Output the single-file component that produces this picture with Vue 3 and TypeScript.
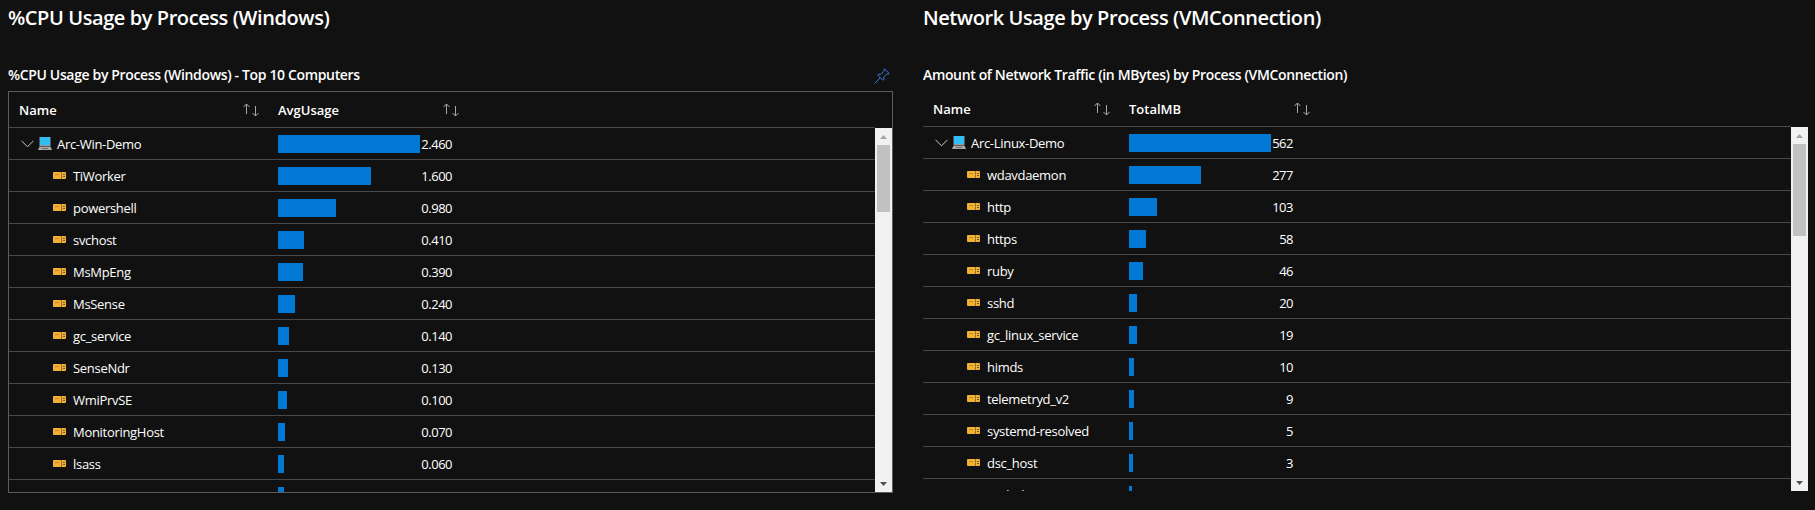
<script setup lang="ts">
type Proc = { name: string; value: number }

type Panel = {
  key: string
  heading: string
  subtitle: string
  metric: string
  pinned: boolean
  digits: number
  thumb: number
  host: string
  total: number
  procs: Proc[]
}

const panels: Panel[] = [
  {
    key: 'cpu',
    heading: '%CPU Usage by Process (Windows)',
    subtitle: '%CPU Usage by Process (Windows) - Top 10 Computers',
    metric: 'AvgUsage',
    pinned: true,
    digits: 3,
    thumb: 67,
    host: 'Arc-Win-Demo',
    total: 2.46,
    procs: [
      { name: 'TiWorker', value: 1.6 },
      { name: 'powershell', value: 0.98 },
      { name: 'svchost', value: 0.41 },
      { name: 'MsMpEng', value: 0.39 },
      { name: 'MsSense', value: 0.24 },
      { name: 'gc_service', value: 0.14 },
      { name: 'SenseNdr', value: 0.13 },
      { name: 'WmiPrvSE', value: 0.1 },
      { name: 'MonitoringHost', value: 0.07 },
      { name: 'lsass', value: 0.06 },
      { name: 'WmiApSrv', value: 0.05 },
    ],
  },
  {
    key: 'net',
    heading: 'Network Usage by Process (VMConnection)',
    subtitle: 'Amount of Network Traffic (in MBytes) by Process (VMConnection)',
    metric: 'TotalMB',
    pinned: false,
    digits: 0,
    thumb: 92,
    host: 'Arc-Linux-Demo',
    total: 562,
    procs: [
      { name: 'wdavdaemon', value: 277 },
      { name: 'http', value: 103 },
      { name: 'https', value: 58 },
      { name: 'ruby', value: 46 },
      { name: 'sshd', value: 20 },
      { name: 'gc_linux_service', value: 19 },
      { name: 'himds', value: 10 },
      { name: 'telemetryd_v2', value: 9 },
      { name: 'systemd-resolved', value: 5 },
      { name: 'dsc_host', value: 3 },
      { name: 'auditd', value: 2 },
    ],
  },
]

// bars never collapse completely, 3px is the floor
function barWidth(value: number, total: number) {
  return `${3 + (value / total) * 139}px`
}
</script>

<template>
  <div class="page">
    <section v-for="p in panels" :key="p.key" class="panel" :class="p.key">
      <h2 class="heading">{{ p.heading }}</h2>
      <div class="subtitle-row">
        <h3 class="subtitle">{{ p.subtitle }}</h3>
        <svg v-if="p.pinned" class="pin" width="16" height="16" viewBox="0 0 16 16" fill="none" stroke="#3a7bd5" stroke-width="1">
          <path d="M10.5 .8 15.2 5.5 14.2 6 13 5.8 9.8 9 9.8 11.6 8.8 12.2 3.8 7.2 4.4 6.2 7 6.2 10.2 3 10 1.8Z" />
          <path d="M6 10 .6 15.4" />
        </svg>
      </div>

      <div class="grid">
        <div class="head">
          <div class="col-name">
            <span>Name</span>
            <svg class="sort" width="16" height="14" viewBox="0 0 16 14" fill="none" stroke="#a8a8a8" stroke-width="1">
              <path d="M3.5 11V1M.5 4 3.5 1 6.5 4" />
              <path d="M12.5 3V13M9.5 10 12.5 13 15.5 10" />
            </svg>
          </div>
          <div class="col-value">
            <span>{{ p.metric }}</span>
            <svg class="sort" width="16" height="14" viewBox="0 0 16 14" fill="none" stroke="#a8a8a8" stroke-width="1">
              <path d="M3.5 11V1M.5 4 3.5 1 6.5 4" />
              <path d="M12.5 3V13M9.5 10 12.5 13 15.5 10" />
            </svg>
          </div>
        </div>

        <div class="body">
          <div class="rows">
            <div class="row">
              <div class="col-name host">
                <svg class="chevron" width="13" height="8" viewBox="0 0 13 8" fill="none" stroke="#c8c8c8" stroke-width="1">
                  <path d="M.5 .8 6.5 6.8 12.5 .8" />
                </svg>
                <svg class="laptop" width="14" height="13" viewBox="0 0 14 13">
                  <rect x="1.5" y="0" width="11" height="9" fill="#8f9aa3" />
                  <rect x="2" y="0" width="10" height="8" fill="#2fbdf5" />
                  <path d="M1.5 9.5H12.5L14 13H0Z" fill="#a9a9a9" />
                  <rect x="4" y="11" width="6" height="1" fill="#6d6d6d" />
                </svg>
                <span>{{ p.host }}</span>
              </div>
              <div class="col-value">
                <div class="track">
                  <div class="bar" :style="{ width: barWidth(p.total, p.total) }" />
                </div>
                <span class="num">{{ p.total.toFixed(p.digits) }}</span>
              </div>
            </div>

            <div v-for="proc in p.procs" :key="proc.name" class="row">
              <div class="col-name proc">
                <svg class="chip" width="13" height="7" viewBox="0 0 13 7">
                  <rect width="13" height="7" rx="1" fill="#f2b136" />
                  <rect x="8" y="0" width="1" height="7" fill="#9a7226" />
                  <rect x="2" y="2" width="4" height="1" fill="#c48d28" />
                  <rect x="10" y="2" width="2" height="1" fill="#7a5a20" />
                  <rect x="10" y="4" width="2" height="1" fill="#7a5a20" />
                </svg>
                <span>{{ proc.name }}</span>
              </div>
              <div class="col-value">
                <div class="track">
                  <div class="bar" :style="{ width: barWidth(proc.value, p.total) }" />
                </div>
                <span class="num">{{ proc.value.toFixed(p.digits) }}</span>
              </div>
            </div>
          </div>

          <div class="scrollbar">
            <div class="arrow-box">
              <svg width="7" height="4" viewBox="0 0 7 4"><path d="M3.5 0 7 4H0Z" fill="#a3a3a3" /></svg>
            </div>
            <div class="thumb" :style="{ height: `${p.thumb}px` }" />
            <div class="arrow-box down">
              <svg width="7" height="4" viewBox="0 0 7 4"><path d="M0 0H7L3.5 4Z" fill="#505050" /></svg>
            </div>
          </div>
        </div>
      </div>
    </section>
  </div>
</template>

<style>
html,
body {
  margin: 0;
  background: #111111;
}
</style>

<style scoped>
.page {
  display: grid;
  grid-template-columns: 915px 1fr;
  width: 1815px;
  height: 510px;
  overflow: hidden;
  background: #111111;
  color: #ffffff;
  font-family: 'Open Sans', 'Liberation Sans', sans-serif;
  font-size: 13px;
}

.panel {
  min-width: 0;
  padding-left: 8px;
}

.panel.net {
  padding-right: 7px;
}

.heading {
  margin: 0;
  font-size: 20px;
  line-height: 36px;
  font-weight: 600;
  letter-spacing: -0.42px;
}

.subtitle-row {
  display: flex;
  align-items: center;
  justify-content: space-between;
  height: 29px;
  margin-top: 26px;
  padding-bottom: 5px;
  box-sizing: border-box;
}

.cpu .subtitle-row {
  width: 884px;
}

.subtitle {
  margin: 0;
  font-size: 14px;
  font-weight: 600;
  letter-spacing: -0.35px;
}

.pin {
  margin-right: 2px;
  margin-top: 3px;
}

.grid {
  display: flex;
  flex-direction: column;
}

.cpu .grid {
  width: 885px;
  height: 402px;
  box-sizing: border-box;
  border: 1px solid #5c5c5c;
  --name-col: 269px;
  --name-pad: 10px;
  --num-col: 32px;
  --chev: 12px;
}

.net .grid {
  height: 400px;
  --name-col: 206px;
  --name-pad: 10px;
  --num-col: 22px;
  --chev: 12px;
}

.head {
  display: flex;
  align-items: center;
  height: 36px;
  margin-right: 17px;
  border-bottom: 1px solid #484848;
  box-sizing: border-box;
  font-weight: 600;
}

.head .col-name {
  width: var(--name-col);
  padding-left: var(--name-pad);
  box-sizing: border-box;
  display: flex;
  align-items: center;
  justify-content: space-between;
  padding-right: 19px;
}

.head .col-value {
  flex: 1;
  display: flex;
  align-items: center;
}

.head .col-value span {
  width: 165px;
}

.sort {
  flex: none;
}

.body {
  display: flex;
  height: 364px;
  min-height: 0;
}

.rows {
  flex: 1;
  min-width: 0;
  overflow: hidden;
}

.row {
  display: flex;
  align-items: center;
  height: 32px;
  box-sizing: border-box;
  border-bottom: 1px solid #484848;
  letter-spacing: -0.3px;
}

.row .col-name {
  width: var(--name-col);
  flex: none;
  display: flex;
  align-items: center;
  box-sizing: border-box;
}

.host {
  padding-left: var(--chev);
}

.chevron {
  margin-right: 4px;
}

.laptop {
  margin-right: 5px;
}

.proc {
  padding-left: 44px;
}

.chip {
  margin-right: 7px;
}

.row .col-value {
  display: flex;
  align-items: center;
}

.track {
  width: 142px;
  flex: none;
}

.bar {
  height: 18px;
  background: #0078d4;
}

.num {
  width: var(--num-col);
  text-align: right;
  white-space: nowrap;
  letter-spacing: -0.5px;
}

.scrollbar {
  width: 17px;
  flex: none;
  display: flex;
  flex-direction: column;
  align-items: center;
  background: #f1f1f1;
}

.arrow-box {
  height: 17px;
  flex: none;
  display: flex;
  align-items: center;
  justify-content: center;
}

.arrow-box.down {
  margin-top: auto;
}

.thumb {
  width: 13px;
  background: #c1c1c1;
}
</style>
